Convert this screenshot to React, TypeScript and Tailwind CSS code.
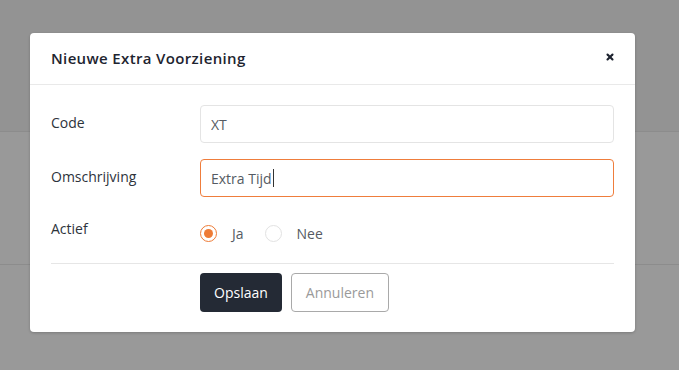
import { X } from 'lucide-react';

// Background page (dimmed by the modal backdrop)
function Backdrop() {
  return (
    <div className="flex h-[370px] w-full flex-col bg-[#939393]">
      <div className="h-[131px] shrink-0" />
      <div className="h-[134px] shrink-0 border-y border-[#8c8c8c] bg-[#999999]" />
      <div className="flex-1 bg-[#999999]" />
    </div>
  );
}

function Radio({ checked, label }: { checked: boolean; label: string }) {
  return (
    <label className="flex items-center">
      <span
        className={
          checked
            ? 'flex h-[17px] w-[17px] items-center justify-center rounded-full border border-[#ee7b36] bg-white'
            : 'flex h-[17px] w-[17px] items-center justify-center rounded-full border border-[#e2e2e2] bg-white'
        }
      >
        {checked && <span className="h-[9px] w-[9px] rounded-full bg-[#ee7b36]" />}
      </span>
      <span className="ml-[15px] text-[14px] text-[#555b63]">{label}</span>
    </label>
  );
}

export default function App() {
  return (
    <div className="relative h-[370px] w-[679px] overflow-hidden font-['Open_Sans','Liberation_Sans',sans-serif]">
      <Backdrop />

      {/* Modal */}
      <div className="absolute left-[30px] top-[33px] w-[605px] rounded-[4px] bg-white shadow-[0_1px_3px_rgba(0,0,0,0.2)]">
        <div className="flex h-[52px] items-center justify-between border-b border-[#e9e9e9] pl-[21px] pr-[20px]">
          <h2 className="text-[15px] font-semibold tracking-[0.35px] text-[#1e2430]">Nieuwe Extra Voorziening</h2>
          <X className="-mt-[3px] h-[10px] w-[10px] text-[#1e2430]" strokeWidth={5} />
        </div>

        <div className="px-[21px] pt-[20px]">
          <div className="grid grid-cols-[149px_1fr] items-center gap-y-[16px]">
            <span className="-mt-[3px] text-[14px] font-medium text-[#2d333b]">Code</span>
            <input
              readOnly
              value="XT"
              className="h-[38px] w-full rounded-[4px] border border-[#e4e4e4] px-[10px] text-[14px] text-[#555b63] outline-none"
            />

            <span className="-mt-[3px] text-[14px] font-medium text-[#2d333b]">Omschrijving</span>
            <div className="flex h-[38px] w-full items-center rounded-[4px] border border-[#ef7d3c] px-[10px] text-[14px] text-[#555b63]">
              Extra Tijd<span className="ml-[1px] h-[18px] w-[1px] bg-[#333]" />
            </div>

            <span className="text-[14px] font-medium text-[#2d333b]">Actief</span>
            <div className="mt-[10px] flex items-center gap-[21px]">
              <Radio checked label="Ja" />
              <Radio checked={false} label="Nee" />
            </div>
          </div>

          <div className="mt-[19px] border-t border-[#e6e6e6]" />

          <div className="flex gap-[9px] pb-[20px] pl-[149px] pt-[9px]">
            <button className="h-[39px] rounded-[4px] bg-[#242a35] px-[14px] text-[14px] text-white">
              Opslaan
            </button>
            <button className="h-[39px] rounded-[4px] border border-[#a9a9a9] bg-white px-[14px] text-[14px] text-[#9a9a9a]">
              Annuleren
            </button>
          </div>
        </div>
      </div>
    </div>
  );
}
